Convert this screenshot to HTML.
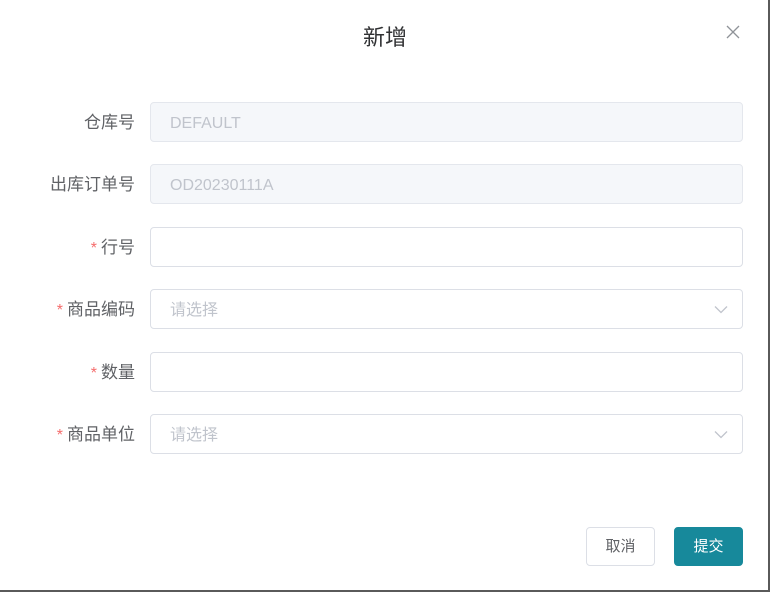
<!DOCTYPE html>
<html><head><meta charset="utf-8"><style>
*{box-sizing:border-box;margin:0;padding:0}
body{width:770px;height:592px;background:#fff;position:relative;overflow:hidden;font-family:"Liberation Sans","Noto Sans CJK SC",sans-serif;}
.rb{position:absolute;right:0;top:0;width:2px;height:592px;background:#5a5a5a}
.bb{position:absolute;left:0;bottom:0;width:770px;height:2px;background:#5a5a5a}
.title{position:absolute;top:23px;left:0;width:770px;text-align:center;font-size:22px;color:#303133;line-height:30px}
.close{position:absolute;left:726px;top:25px}
.lbl{position:absolute;right:635px;font-size:17px;color:#606266;line-height:42px;white-space:nowrap}
.lbl i{color:#f56c6c;font-style:normal;margin-right:4px;font-size:16px}
.in{position:absolute;left:150px;width:593px;height:40px;border:1px solid #dcdfe6;border-radius:4px;font-size:16px;line-height:42px;padding-left:19px;color:#c0c4cc}
.dis{background:#f5f7fa;border-color:#e4e7ed}
.arr{position:absolute;right:14px;top:15px}
.btn{position:absolute;top:527px;height:39px;width:69px;border-radius:4px;font-size:15px;line-height:38px;text-align:center}
</style></head><body>
<div class="title">新增</div>
<svg class="close" width="14" height="14" viewBox="0 0 14 14"><path d="M1 1L13 13M13 1L1 13" stroke="#909399" stroke-width="1.3"/></svg>

<div class="lbl" style="top:102px">仓库号</div>
<div class="in dis" style="top:102px">DEFAULT</div>
<div class="lbl" style="top:164px">出库订单号</div>
<div class="in dis" style="top:164px">OD20230111A</div>
<div class="lbl" style="top:227px"><i>*</i>行号</div>
<div class="in" style="top:227px"></div>
<div class="lbl" style="top:289px"><i>*</i>商品编码</div>
<div class="in" style="top:289px">请选择<svg class="arr" width="14" height="9" viewBox="0 0 14 9"><path d="M1 1.5L7 7.5L13 1.5" fill="none" stroke="#c0c4cc" stroke-width="1.3"/></svg></div>
<div class="lbl" style="top:352px"><i>*</i>数量</div>
<div class="in" style="top:352px"></div>
<div class="lbl" style="top:414px"><i>*</i>商品单位</div>
<div class="in" style="top:414px">请选择<svg class="arr" width="14" height="9" viewBox="0 0 14 9"><path d="M1 1.5L7 7.5L13 1.5" fill="none" stroke="#c0c4cc" stroke-width="1.3"/></svg></div>

<div class="btn" style="left:586px;border:1px solid #dcdfe6;color:#606266">取消</div>
<div class="btn" style="left:674px;background:#17899b;color:#fff;border:1px solid #17899b">提交</div>
<div class="rb"></div><div class="bb"></div>
</body></html>
